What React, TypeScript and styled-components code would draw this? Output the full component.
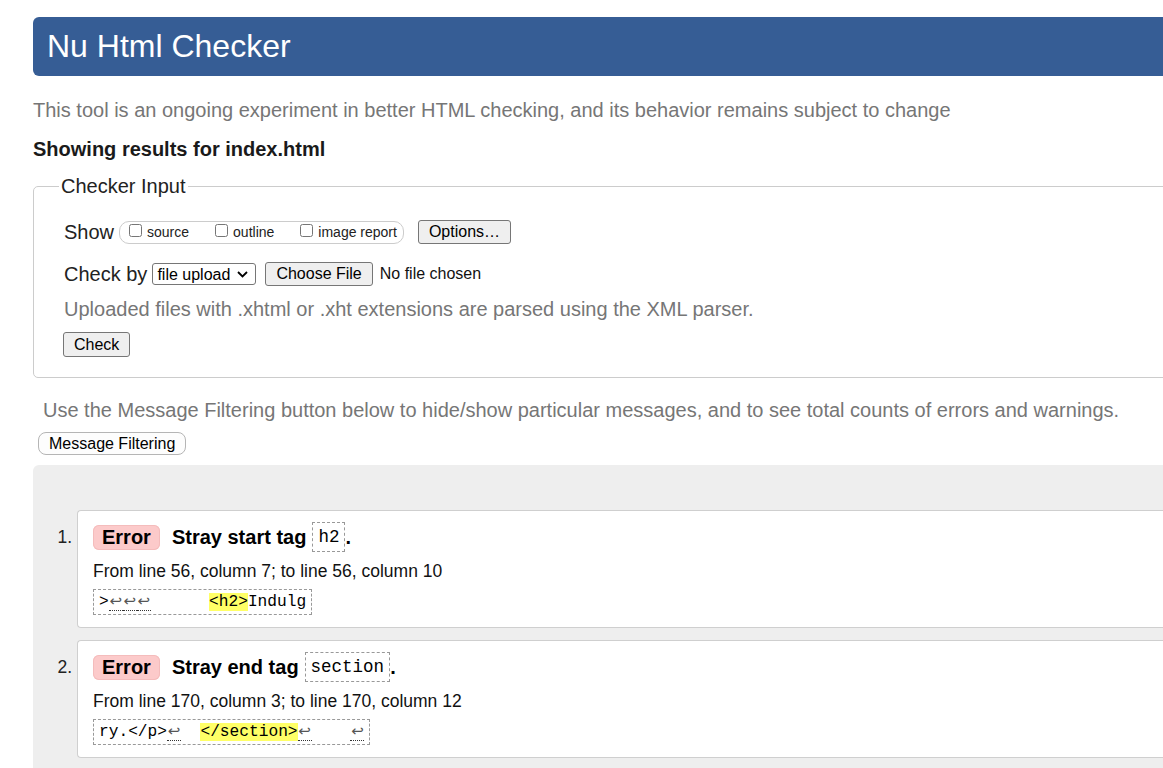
import styled, { createGlobalStyle } from "styled-components";

type Piece = { text: string; kind: "plain" | "mark" | "ret" };

interface Message {
  id: number;
  summary: string;
  tag: string;
  location: string;
  extract: Piece[];
}

const messages: Message[] = [
  {
    id: 1,
    summary: "Stray start tag",
    tag: "h2",
    location: "From line 56, column 7; to line 56, column 10",
    extract: [
      { text: ">", kind: "plain" },
      { text: "↩", kind: "ret" },
      { text: "↩", kind: "ret" },
      { text: "↩", kind: "ret" },
      { text: "      ", kind: "plain" },
      { text: "<h2>", kind: "mark" },
      { text: "Indulg", kind: "plain" },
    ],
  },
  {
    id: 2,
    summary: "Stray end tag",
    tag: "section",
    location: "From line 170, column 3; to line 170, column 12",
    extract: [
      { text: "ry.</p>", kind: "plain" },
      { text: "↩", kind: "ret" },
      { text: "  ", kind: "plain" },
      { text: "</section>", kind: "mark" },
      { text: "↩", kind: "ret" },
      { text: "    ", kind: "plain" },
      { text: "↩", kind: "ret" },
    ],
  },
];

const GlobalStyle = createGlobalStyle`
  html, body {
    margin: 0;
    padding: 0;
    overflow: hidden;
    background: #fff;
  }
  body {
    font-family: "Liberation Sans", Arial, sans-serif;
    color: #000;
  }
`;

export default function App() {
  return (
    <>
      <GlobalStyle />
      <Page>
        <Header>
          <Title>Nu Html Checker</Title>
        </Header>
        <Intro>
          This tool is an ongoing experiment in better HTML checking, and its behavior remains subject to change
        </Intro>
        <ResultsFor>Showing results for index.html</ResultsFor>

        <Fieldset>
          <Legend>Checker Input</Legend>
          <Row $top={22}>
            <FieldLabel>Show</FieldLabel>
            <CheckGroup>
              <CheckLabel>
                <input type="checkbox" />
                source
              </CheckLabel>
              <CheckLabel>
                <input type="checkbox" />
                outline
              </CheckLabel>
              <CheckLabel $last>
                <input type="checkbox" />
                image report
              </CheckLabel>
            </CheckGroup>
            <NativeButton>Options…</NativeButton>
          </Row>
          <Row $top={18}>
            <FieldLabel>Check by</FieldLabel>
            <SelectWrap>
              <Select defaultValue="file">
                <option value="address">address</option>
                <option value="file">file upload</option>
                <option value="text">text input</option>
              </Select>
              <Chevron width="11" height="7" viewBox="0 0 11 7">
                <path d="M1 1l4.5 4.5L10 1" fill="none" stroke="#000" strokeWidth="1.8" />
              </Chevron>
            </SelectWrap>
            <NativeButton>Choose File</NativeButton>
            <NoFile>No file chosen</NoFile>
          </Row>
          <Hint>Uploaded files with .xhtml or .xht extensions are parsed using the XML parser.</Hint>
          <CheckButton>Check</CheckButton>
        </Fieldset>

        <FilterNote>
          Use the Message Filtering button below to hide/show particular messages, and to see total counts of errors and warnings.
        </FilterNote>
        <FilterButton>Message Filtering</FilterButton>

        <Results>
          <MessageList>
            {messages.map((m) => (
              <MessageRow key={m.id}>
                <Index>{m.id}.</Index>
                <Card>
                  <HeadRow>
                    <Badge>Error</Badge>
                    <Summary>{m.summary}</Summary>
                    <Code>{m.tag}</Code>
                    <Summary>.</Summary>
                  </HeadRow>
                  <Location>{m.location}</Location>
                  <Extract>
                    {m.extract.map((p, i) => {
                      if (p.kind === "ret") return <Ret key={i}>{p.text}</Ret>;
                      if (p.kind === "mark") return <Mark key={i}>{p.text}</Mark>;
                      return <span key={i}>{p.text}</span>;
                    })}
                  </Extract>
                </Card>
              </MessageRow>
            ))}
          </MessageList>
        </Results>
      </Page>
    </>
  );
}

const Page = styled.div`
  width: 1240px;
  padding: 17px 0 0 33px;
`;

const Header = styled.header`
  display: flex;
  align-items: center;
  height: 59px;
  padding-left: 14px;
  background: #365d95;
  border-radius: 6px;
`;

const Title = styled.h1`
  margin: 0;
  font-size: 32px;
  font-weight: normal;
  color: #fff;
`;

const Intro = styled.p`
  margin: 22px 0 0;
  font-size: 20px;
  line-height: 24px;
  color: #767676;
`;

const ResultsFor = styled.h2`
  margin: 15px 0 0;
  font-size: 20px;
  line-height: 24px;
  font-weight: bold;
  color: #1a1a1a;
`;

const Fieldset = styled.fieldset`
  margin: 13px 0 0;
  padding: 0 30px 20px;
  border: 1px solid #cccccc;
  border-radius: 5px;
  min-inline-size: auto;
`;

const Legend = styled.legend`
  margin-left: -5px;
  padding: 0 2px;
  font-size: 20px;
  line-height: 24px;
  color: #222;
`;

const Row = styled.div<{ $top: number }>`
  display: flex;
  align-items: center;
  height: 24px;
  margin-top: ${(p) => p.$top}px;
`;

const FieldLabel = styled.span`
  font-size: 20px;
  color: #222;
  margin-right: 5px;
`;

const CheckGroup = styled.div`
  display: inline-flex;
  align-items: center;
  height: 21px;
  padding: 0 6px 0 5px;
  margin-right: 14px;
  border: 1px solid #cccccc;
  border-radius: 10px;

  input {
    width: 13px;
    height: 13px;
    margin: 0 5px 3px 4px;
  }
`;

const CheckLabel = styled.label<{ $last?: boolean }>`
  display: inline-flex;
  align-items: center;
  font-size: 14px;
  color: #222;
  margin-right: ${(p) => (p.$last ? 0 : 22)}px;
`;

const NativeButton = styled.button`
  height: 24px;
  padding: 0 10px;
  font-family: "Liberation Sans", Arial, sans-serif;
  font-size: 16px;
  color: #000;
  background: #efefef;
  border: 1px solid #767676;
  border-radius: 3px;
`;

const CheckButton = styled(NativeButton)`
  display: block;
  height: 25px;
  margin: 11px 0 0 -1px;
`;

const SelectWrap = styled.span`
  position: relative;
  display: inline-flex;
  margin-right: 9px;
`;

const Select = styled.select`
  appearance: none;
  width: 104px;
  height: 22px;
  padding: 0 0 0 4px;
  font-family: "Liberation Sans", Arial, sans-serif;
  font-size: 16px;
  color: #000;
  background: #fff;
  border: 1px solid #767676;
  border-radius: 3px;
`;

const Chevron = styled.svg`
  position: absolute;
  right: 8px;
  top: 8px;
  pointer-events: none;
`;

const NoFile = styled.span`
  margin-left: 7px;
  font-size: 16px;
  color: #111;
`;

const Hint = styled.p`
  margin: 11px 0 0;
  font-size: 20px;
  line-height: 24px;
  color: #767676;
`;

const FilterNote = styled.p`
  margin: 20px 0 0 10px;
  font-size: 20px;
  line-height: 24px;
  color: #767676;
`;

const FilterButton = styled.button`
  display: block;
  height: 23px;
  margin: 10px 0 0 5px;
  padding: 0 10px;
  font-family: "Liberation Sans", Arial, sans-serif;
  font-size: 16px;
  color: #000;
  background: #fdfdfd;
  border: 1px solid #b5b5b5;
  border-radius: 8px;
`;

const Results = styled.div`
  margin-top: 10px;
  padding: 45px 0 40px;
  background: #eeeeee;
  border-radius: 6px 0 0 0;
`;

const MessageList = styled.ol`
  display: flex;
  flex-direction: column;
  gap: 12px;
  margin: 0;
  padding: 0;
  list-style: none;
`;

const MessageRow = styled.li`
  display: grid;
  grid-template-columns: 44px 1fr;
`;

const Index = styled.span`
  padding: 12px 5px 0 0;
  text-align: right;
  font-size: 17.5px;
  line-height: 30px;
  color: #222;
`;

const Card = styled.div`
  padding: 11px 0 12px 15px;
  background: #fff;
  border: 1px solid #cfcfcf;
  border-right: none;
  border-radius: 4px 0 0 4px;
`;

const HeadRow = styled.div`
  display: flex;
  align-items: center;
  height: 30px;
`;

const Badge = styled.span`
  height: 25px;
  padding: 0 9px;
  margin-right: 12px;
  line-height: 25px;
  font-size: 20px;
  font-weight: bold;
  background: #fccaca;
  border-radius: 6px;
  box-shadow: inset 0 0 0 1px #f4bcbc;
`;

const Summary = styled.span`
  font-size: 20px;
  font-weight: bold;
`;

const Code = styled.code`
  margin-left: 6px;
  padding: 0 5px;
  font-family: "Liberation Mono", "DejaVu Sans Mono", monospace;
  font-size: 17.5px;
  line-height: 28px;
  border: 1px dashed #999;
`;

const Location = styled.div`
  margin-top: 8px;
  font-size: 17.5px;
  line-height: 22px;
  color: #111;
`;

const Extract = styled.code`
  display: block;
  width: fit-content;
  margin-top: 7px;
  padding: 0 5px;
  font-family: "Liberation Mono", "DejaVu Sans Mono", monospace;
  font-size: 16.2px;
  line-height: 24px;
  white-space: pre;
  border: 1px dashed #999;
`;

const Mark = styled.mark`
  background: #ffff66;
  color: #000;
`;

const Ret = styled.span`
  display: inline-block;
  width: 14px;
  text-align: center;
  font-family: "DejaVu Sans", sans-serif;
  font-size: 15px;
  line-height: 17px;
  color: #555;
  border-bottom: 1px dotted #333;
`;
